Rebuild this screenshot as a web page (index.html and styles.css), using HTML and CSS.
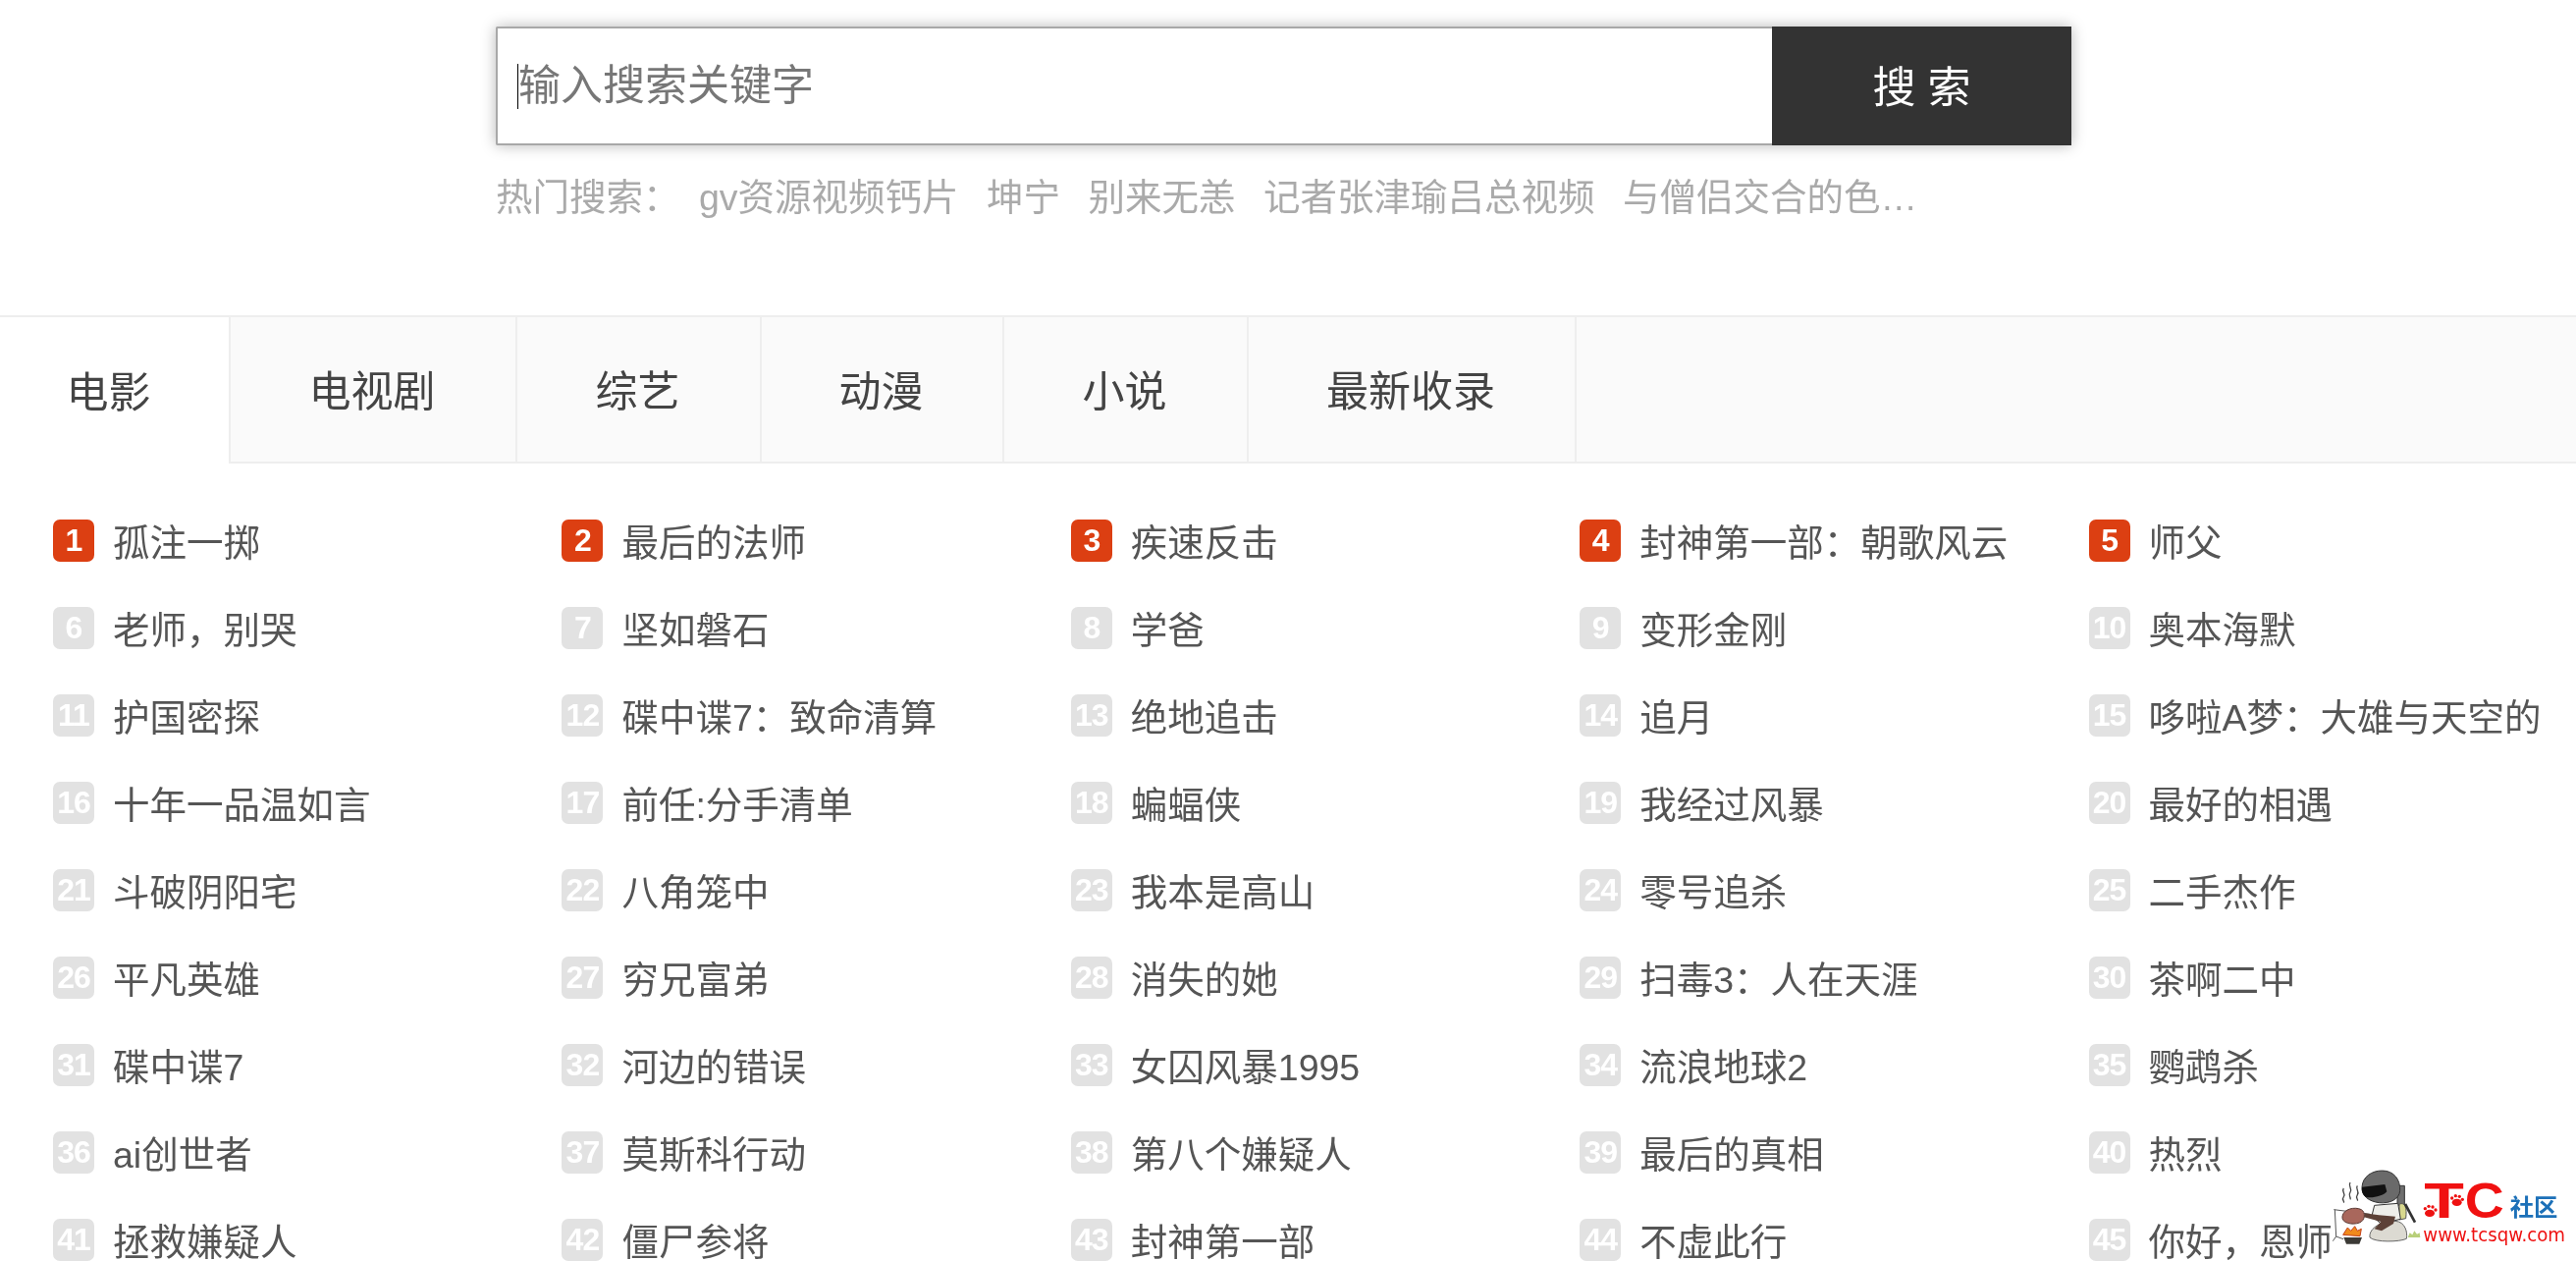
FILE: index.html
```html
<!DOCTYPE html>
<html lang="zh-CN">
  <head>
    <meta charset="UTF-8" />
    <meta name="viewport" content="width=device-width, initial-scale=1.0" />
    <title>热门搜索</title>
    <link rel="stylesheet" href="styles.css">
  </head>
  <body>
    <div class="search">
      <form class="search-form">
        <div class="search-input">
          <span class="caret"></span>
          <input type="text" placeholder="输入搜索关键字" />
        </div>
        <button type="button" class="search-btn">搜 索</button>
      </form>
      <div class="hot">
        <span class="hot-label">热门搜索：</span>
        <a>gv资源视频钙片</a>
        <a>坤宁</a>
        <a>别来无恙</a>
        <a>记者张津瑜吕总视频</a>
        <a>与僧侣交合的色…</a>
      </div>
    </div>

    <ul class="tabs">
      <li class="tab tab-active tab-movie">电影</li>
      <li class="tab tab-tv">电视剧</li>
      <li class="tab tab-show">综艺</li>
      <li class="tab tab-anime">动漫</li>
      <li class="tab tab-novel">小说</li>
      <li class="tab tab-new">最新收录</li>
    </ul>

    <ol class="rank">
      <li class="item top"><b>1</b>孤注一掷</li>
      <li class="item top"><b>2</b>最后的法师</li>
      <li class="item top"><b>3</b>疾速反击</li>
      <li class="item top"><b>4</b>封神第一部：朝歌风云</li>
      <li class="item top"><b>5</b>师父</li>
      <li class="item"><b>6</b>老师，别哭</li>
      <li class="item"><b>7</b>坚如磐石</li>
      <li class="item"><b>8</b>学爸</li>
      <li class="item"><b>9</b>变形金刚</li>
      <li class="item"><b>10</b>奥本海默</li>
      <li class="item"><b>11</b>护国密探</li>
      <li class="item"><b>12</b>碟中谍7：致命清算</li>
      <li class="item"><b>13</b>绝地追击</li>
      <li class="item"><b>14</b>追月</li>
      <li class="item"><b>15</b>哆啦A梦：大雄与天空的</li>
      <li class="item"><b>16</b>十年一品温如言</li>
      <li class="item"><b>17</b>前任:分手清单</li>
      <li class="item"><b>18</b>蝙蝠侠</li>
      <li class="item"><b>19</b>我经过风暴</li>
      <li class="item"><b>20</b>最好的相遇</li>
      <li class="item"><b>21</b>斗破阴阳宅</li>
      <li class="item"><b>22</b>八角笼中</li>
      <li class="item"><b>23</b>我本是高山</li>
      <li class="item"><b>24</b>零号追杀</li>
      <li class="item"><b>25</b>二手杰作</li>
      <li class="item"><b>26</b>平凡英雄</li>
      <li class="item"><b>27</b>穷兄富弟</li>
      <li class="item"><b>28</b>消失的她</li>
      <li class="item"><b>29</b>扫毒3：人在天涯</li>
      <li class="item"><b>30</b>茶啊二中</li>
      <li class="item"><b>31</b>碟中谍7</li>
      <li class="item"><b>32</b>河边的错误</li>
      <li class="item"><b>33</b>女囚风暴1995</li>
      <li class="item"><b>34</b>流浪地球2</li>
      <li class="item"><b>35</b>鹦鹉杀</li>
      <li class="item"><b>36</b>ai创世者</li>
      <li class="item"><b>37</b>莫斯科行动</li>
      <li class="item"><b>38</b>第八个嫌疑人</li>
      <li class="item"><b>39</b>最后的真相</li>
      <li class="item"><b>40</b>热烈</li>
      <li class="item"><b>41</b>拯救嫌疑人</li>
      <li class="item"><b>42</b>僵尸参将</li>
      <li class="item"><b>43</b>封神第一部</li>
      <li class="item"><b>44</b>不虚此行</li>
      <li class="item"><b>45</b>你好，恩师</li>
    </ol>

    <svg class="watermark" viewBox="0 0 852 342" aria-label="TC社区">
      <!-- steam -->
      <g fill="none" stroke="#444" stroke-width="4">
        <path d="M142 120c-8 10 8 16 0 26s4 12 0 18" />
        <path d="M162 102c-8 12 8 18 0 30s4 14 0 22" />
        <path d="M184 112c-8 10 8 16 0 28s4 12 0 18" />
      </g>
      <!-- spit and fire -->
      <g fill="none" stroke="#555" stroke-width="3">
        <path d="M112 185l110 14" />
        <path d="M115 185l4 82-10 14M119 267l22 8" />
      </g>
      <path d="M138 205c4-22 38-30 58-20 14 8 12 34-6 40-20 8-56 2-52-20z" fill="#a9675c" stroke="#5b3a34" stroke-width="3" />
      <path d="M140 262l14-22 10 10 12-14 8 14 12-6-4 22z" fill="#f08a1c" stroke="#c2401a" stroke-width="3" />
      <path d="M142 270h56l-8 20h-40z" fill="#3c3a36" />
      <!-- rock and grass -->
      <path d="M222 270c-4-30 40-52 78-50 30 2 38 34 34 54-20 10-96 12-112-4z" fill="#dcdad2" stroke="#666" stroke-width="3" />
      <path d="M338 270l6-14 8 6 6-12 8 10 8-4 2 14z" fill="#b8cf7a" />
      <!-- soldier -->
      <path d="M306 112h22v60h-22z" fill="#6e6e6e" stroke="#333" stroke-width="3" />
      <path d="M312 168c18-6 24 10 20 44l-20 4z" fill="#d8d88e" stroke="#555" stroke-width="3" />
      <path d="M330 168l30 56" stroke="#333" stroke-width="8" />
      <path d="M236 172l72-6 8 48-60 14-28-24z" fill="#eeeeea" stroke="#333" stroke-width="3" />
      <path d="M206 196l44 6 50 4-6 22-36 22-22-6 20-22-52-14z" fill="#5d4137" />
      <path d="M198 116c2-32 30-50 62-50 36 0 56 28 54 62-2 24-30 40-64 36-30-4-54-20-52-48z" fill="#6a6a6a" stroke="#333" stroke-width="3" />
      <path d="M198 116l70-8 6 22c-10 14-50 22-64 16-10-6-14-18-12-30z" fill="#111" />
      <!-- logo text -->
      <text class="wm-tc" x="388" y="210" textLength="122" lengthAdjust="spacingAndGlyphs">T</text>
      <text class="wm-tc" x="512" y="210" textLength="120" lengthAdjust="spacingAndGlyphs">C</text>
      <text class="wm-cn" x="650" y="204" textLength="146" lengthAdjust="spacingAndGlyphs">社区</text>
      <text class="wm-url" x="385" y="281" textLength="434" lengthAdjust="spacingAndGlyphs">www.tcsqw.com</text>
      <!-- paws -->
      <g fill="#ee1111">
        <ellipse cx="405" cy="196" rx="15" ry="11" />
        <circle cx="391" cy="182" r="5" /><circle cx="402" cy="175" r="5" /><circle cx="414" cy="177" r="5" /><circle cx="423" cy="186" r="5" />
        <ellipse cx="488" cy="163" rx="15" ry="11" />
        <circle cx="473" cy="150" r="5" /><circle cx="484" cy="143" r="5" /><circle cx="496" cy="145" r="5" /><circle cx="505" cy="154" r="5" />
      </g>
    </svg>
  </body>
</html>
```

FILE: styles.css
```css
html,
body {
  height: 100%;
}
body {
  margin: 0;
  overflow: hidden;
  position: relative;
  background-color: #fff;
  color: #555;
  font-family: "Liberation Sans", "Noto Sans CJK SC", sans-serif;
  filter: blur(0.5px);
}
ul,
ol {
  list-style: none;
  margin: 0;
  padding: 0;
}

/* search */
.search {
  height: 321px;
  padding: 27px 0 0 505px;
  box-sizing: border-box;
}
.search-form {
  display: flex;
  width: 1605px;
  height: 121px;
  box-shadow: 0 0 14px rgba(0, 0, 0, 0.28);
}
.search-input {
  display: flex;
  align-items: center;
  width: 1300px;
  box-sizing: border-box;
  padding-left: 20px;
  border: 2px solid #a8a8a8;
  border-right: none;
  border-radius: 2px 0 0 2px;
  background-color: #fff;
}
.caret {
  width: 4px;
  height: 46px;
  background-color: #000;
  flex: none;
}
.search-input input {
  flex: 1;
  min-width: 0;
  border: none;
  outline: none;
  padding: 0;
  margin-left: -3px;
  font-family: inherit;
  font-size: 43px;
  color: #333;
}
.search-input input::placeholder {
  color: #777;
  opacity: 1;
}
.search-btn {
  width: 305px;
  padding: 0 0 4px;
  border: none;
  background-color: #333;
  color: #fff;
  font-family: inherit;
  font-size: 44px;
}
.hot {
  display: flex;
  gap: 28.5px;
  margin-top: 28px;
  font-size: 37.5px;
  line-height: 50px;
  color: #aaa;
}
.hot-label {
  margin-right: -9px;
}

/* tabs */
.tabs {
  display: flex;
  height: 147px;
  border-top: 2px solid #eee;
  border-bottom: 2px solid #eee;
  background-color: #fafafa;
  color: #444;
}
.tab {
  display: flex;
  align-items: center;
  justify-content: center;
  box-sizing: border-box;
  padding: 0 2px 4px 0;
  font-size: 43px;
  background-color: #fafafa;
  border-right: 2px solid #eee;
}
.tab-active {
  height: 149px;
  padding-right: 12px;
  background-color: #fff;
  border-right-color: #eee;
}
.tab-movie {
  width: 235px;
}
.tab-tv {
  width: 292px;
}
.tab-show {
  width: 249px;
}
.tab-anime {
  width: 247px;
}
.tab-novel {
  width: 249px;
}
.tab-new {
  width: 334px;
}

/* rank list */
.rank {
  display: grid;
  grid-template-columns: repeat(5, 518.4px);
  grid-auto-rows: 89px;
  padding: 33px 0 0 54px;
}
.item {
  display: flex;
  align-items: center;
  font-size: 37.5px;
  white-space: nowrap;
  overflow: hidden;
}
.item b {
  flex: none;
  width: 42px;
  height: 43px;
  margin: 2px 19px 0 0;
  border-radius: 7px;
  background-color: #e2e2e2;
  color: #fff;
  font-size: 32px;
  font-weight: bold;
  letter-spacing: -1px;
  line-height: 43px;
  text-align: center;
}
.top b {
  background-color: #dc3f12;
}

/* site watermark */
.watermark {
  position: absolute;
  right: 0;
  bottom: 0;
  width: 284px;
  height: 114px;
}
.wm-tc {
  font-family: "Liberation Sans", sans-serif;
  font-size: 150px;
  font-weight: bold;
  fill: #f01111;
}
.wm-cn {
  font-family: "Noto Sans CJK SC", sans-serif;
  font-size: 72px;
  font-weight: 700;
  fill: #1c70b8;
}
.wm-url {
  font-family: "DejaVu Sans", sans-serif;
  font-size: 58px;
  fill: #ee1111;
}
```
